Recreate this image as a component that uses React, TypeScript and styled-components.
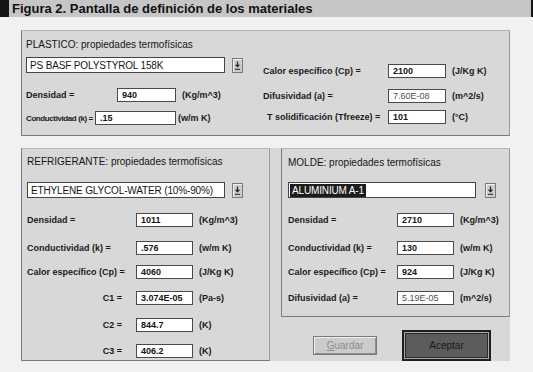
import React from 'react';
import styled, { createGlobalStyle } from 'styled-components';

const Global = createGlobalStyle`
  body {
    margin: 0;
    background: #f1f1f1;
    font-family: "Liberation Sans", Arial, sans-serif;
    color: #151515;
  }
`;

const Page = styled.div`
  width: 533px;
  height: 372px;
  overflow: hidden;
`;

const TitleBar = styled.div`
  height: 17px;
  box-sizing: border-box;
  background: #c6c6c6;
  border-left: 9px solid #141414;
  border-right: 2px solid #141414;
  padding-left: 3px;
  display: flex;
  align-items: center;
  font-size: 13px;
  font-weight: bold;
  color: #111;
`;

const Body = styled.div`
  padding: 13px 23px 0 21px;
  display: flex;
  flex-direction: column;
  gap: 12px;
`;

const Panel = styled.div<{ $w: number; $h: number; $pt: number; $pl: number }>`
  box-sizing: border-box;
  width: ${p => p.$w}px;
  height: ${p => p.$h}px;
  padding: ${p => p.$pt}px 0 0 ${p => p.$pl}px;
  background: #d8d8d8;
  border: 1px solid #7c7c7c;
  border-top-color: #b4b4b4;
  border-right-color: #9a9a9a;
`;

const PlasticGrid = styled.div`
  display: grid;
  grid-template-columns: 237px 1fr;
`;

const Column = styled.div<{ $pt?: number }>`
  display: flex;
  flex-direction: column;
  padding-top: ${p => p.$pt ?? 0}px;
`;

const PanelTitle = styled.div`
  font-size: 10px;
  line-height: 12px;
  height: 12px;
  white-space: nowrap;
`;

const ComboRow = styled.div<{ $mt: number; $gap: number }>`
  display: flex;
  align-items: center;
  gap: ${p => p.$gap}px;
  margin-top: ${p => p.$mt}px;
`;

const ComboBox = styled.div<{ $w: number }>`
  box-sizing: border-box;
  width: ${p => p.$w}px;
  height: 16px;
  background: #fff;
  border: 1px solid #444;
  padding-left: 3px;
  display: flex;
  align-items: center;
  font-size: 10px;
  letter-spacing: -0.15px;
  white-space: nowrap;
  overflow: hidden;
`;

const Selected = styled.span`
  background: #1c1c1c;
  color: #fff;
  line-height: 13px;
  margin-left: -2px;
  padding: 0 2px;
`;

const ArrowButton = styled.div`
  box-sizing: border-box;
  width: 11px;
  height: 15px;
  background: #cdcdcd;
  border: 1px solid #7a7a7a;
  box-shadow: inset 1px 1px #f2f2f2;
  display: flex;
  align-items: center;
  justify-content: center;
`;

const Row = styled.div<{ $mt: number; $label: number; $field: number; $gap: number }>`
  display: grid;
  grid-template-columns: ${p => p.$label}px ${p => p.$field}px auto;
  column-gap: ${p => p.$gap}px;
  align-items: center;
  margin-top: ${p => p.$mt}px;
`;

const Label = styled.div<{ $right?: boolean; $indent?: number; $tight?: boolean }>`
  font-size: ${p => (p.$tight ? 8 : 9)}px;
  letter-spacing: ${p => (p.$tight ? -0.4 : 0)}px;
  font-weight: bold;
  white-space: nowrap;
  text-align: ${p => (p.$right ? 'right' : 'left')};
  padding-right: ${p => (p.$right ? 8 : 0)}px;
  padding-left: ${p => p.$indent ?? 0}px;
  color: #1a1a1a;
`;

const TextField = styled.div<{ $off?: boolean }>`
  box-sizing: border-box;
  height: 14px;
  background: #fff;
  border: 1px solid #4a4a4a;
  padding-left: 4px;
  display: flex;
  align-items: center;
  font-size: 9px;
  font-weight: ${p => (p.$off ? 'normal' : 'bold')};
  color: ${p => (p.$off ? '#505050' : '#151515')};
`;

const Unit = styled.div`
  font-size: 9px;
  font-weight: bold;
  white-space: nowrap;
  color: #1a1a1a;
`;

const Lower = styled.div`
  display: flex;
`;

const RightSide = styled.div`
  width: 240px;
  height: 213px;
  background: #d8d8d8;
  display: flex;
  flex-direction: column;
  padding-left: 11px;
  box-sizing: border-box;
`;

const Buttons = styled.div`
  flex: 1;
  display: flex;
  align-items: center;
  gap: 25px;
  padding-left: 32px;
  padding-top: 12px;
`;

const GuardarBtn = styled.div`
  box-sizing: border-box;
  width: 64px;
  height: 19px;
  background: #cbcbcb;
  border: 1px solid #7a7a7a;
  box-shadow: inset 1px 1px #f0f0f0, inset -1px -1px #8e8e8e;
  display: flex;
  align-items: center;
  justify-content: center;
  font-size: 10px;
  color: #8c8c8c;
`;

const AceptarBtn = styled.div`
  box-sizing: border-box;
  width: 89px;
  height: 31px;
  background: #5c5c5c;
  border: 2px solid #1e1e1e;
  box-shadow: inset 0 0 0 1px #a8a8a8, inset 0 0 0 2px #2a2a2a;
  display: flex;
  align-items: center;
  justify-content: center;
  font-size: 10px;
  color: #1a1a1a;
`;

const DownArrow = () => (
  <svg width="7" height="9" viewBox="0 0 7 9">
    <path d="M3.5 0.5 V5" stroke="#222" strokeWidth="1.2" />
    <path d="M0.8 3.8 H6.2 L3.5 6.6 Z" fill="#222" />
    <path d="M0.8 8.3 H6.2" stroke="#222" strokeWidth="1" />
  </svg>
);

const Combo: React.FC<{ w: number; gap: number; mt: number; children: React.ReactNode }> = ({ w, gap, mt, children }) => (
  <ComboRow $mt={mt} $gap={gap}>
    <ComboBox $w={w}>{children}</ComboBox>
    <ArrowButton>
      <DownArrow />
    </ArrowButton>
  </ComboRow>
);

type Prop = {
  label: string;
  value: string;
  unit: string;
  mt: number;
  off?: boolean;
  right?: boolean;
  indent?: number;
  tight?: boolean;
  labelW?: number;
  fieldW?: number;
  gap?: number;
};

const PropRow: React.FC<Prop & { dl: number; df: number }> = p => (
  <Row $mt={p.mt} $label={p.labelW ?? p.dl} $field={p.fieldW ?? p.df} $gap={p.gap ?? 6}>
    <Label $right={p.right} $indent={p.indent} $tight={p.tight}>
      {p.label}
    </Label>
    <TextField $off={p.off}>{p.value}</TextField>
    <Unit>{p.unit}</Unit>
  </Row>
);

const plasticLeft: Prop[] = [
  { label: 'Densidad =', value: '940', unit: '(Kg/m^3)', mt: 15 },
  { label: 'Conductividad (k) =', value: '.15', unit: '(w/m K)', mt: 9, tight: true, labelW: 67, fieldW: 81, gap: 2 },
];

const plasticRight: Prop[] = [
  { label: 'Calor específico (Cp) =', value: '2100', unit: '(J/Kg K)', mt: 0 },
  { label: 'Difusividad (a) =', value: '7.60E-08', unit: '(m^2/s)', mt: 11, off: true },
  { label: 'T solidificación (Tfreeze) =', value: '101', unit: '(°C)', mt: 7, indent: 4 },
];

const refrigerante: Prop[] = [
  { label: 'Densidad =', value: '1011', unit: '(Kg/m^3)', mt: 15 },
  { label: 'Conductividad (k) =', value: '.576', unit: '(w/m K)', mt: 14 },
  { label: 'Calor específico (Cp) =', value: '4060', unit: '(J/Kg K)', mt: 10 },
  { label: 'C1 =', value: '3.074E-05', unit: '(Pa-s)', mt: 12, right: true },
  { label: 'C2 =', value: '844.7', unit: '(K)', mt: 13, right: true },
  { label: 'C3 =', value: '406.2', unit: '(K)', mt: 12, right: true },
];

const molde: Prop[] = [
  { label: 'Densidad =', value: '2710', unit: '(Kg/m^3)', mt: 15 },
  { label: 'Conductividad (k) =', value: '130', unit: '(w/m K)', mt: 14 },
  { label: 'Calor específico (Cp) =', value: '924', unit: '(J/Kg K)', mt: 10 },
  { label: 'Difusividad (a) =', value: '5.19E-05', unit: '(m^2/s)', mt: 12, off: true },
];

const App: React.FC = () => (
  <Page>
    <Global />
    <TitleBar>Figura 2. Pantalla de definición de los materiales</TitleBar>
    <Body>
      <Panel $w={489} $h={106} $pt={8} $pl={4}>
        <PlasticGrid>
          <Column>
            <PanelTitle>PLASTICO: propiedades termofísicas</PanelTitle>
            <Combo w={199} gap={7} mt={6}>PS BASF POLYSTYROL 158K</Combo>
            {plasticLeft.map(r => (
              <PropRow key={r.label} {...r} dl={85} df={59} />
            ))}
          </Column>
          <Column $pt={25}>
            {plasticRight.map(r => (
              <PropRow key={r.label} {...r} dl={119} df={58} />
            ))}
          </Column>
        </PlasticGrid>
      </Panel>
      <Lower>
        <Panel $w={249} $h={213} $pt={7} $pl={5}>
          <Column>
            <PanelTitle>REFRIGERANTE: propiedades termofísicas</PanelTitle>
            <Combo w={198} gap={7} mt={14}>ETHYLENE GLYCOL-WATER (10%-90%)</Combo>
            {refrigerante.map(r => (
              <PropRow key={r.label} {...r} dl={103} df={57} />
            ))}
          </Column>
        </Panel>
        <RightSide>
          <Panel $w={229} $h={169} $pt={8} $pl={6}>
            <Column>
              <PanelTitle>MOLDE: propiedades termofísicas</PanelTitle>
              <Combo w={188} gap={9} mt={13}>
                <Selected>ALUMINIUM A-1</Selected>
              </Combo>
              {molde.map(r => (
                <PropRow key={r.label} {...r} dl={103} df={57} />
              ))}
            </Column>
          </Panel>
          <Buttons>
            <GuardarBtn>
              <span>
                <u>G</u>uardar
              </span>
            </GuardarBtn>
            <AceptarBtn>Aceptar</AceptarBtn>
          </Buttons>
        </RightSide>
      </Lower>
    </Body>
  </Page>
);

export default App;
